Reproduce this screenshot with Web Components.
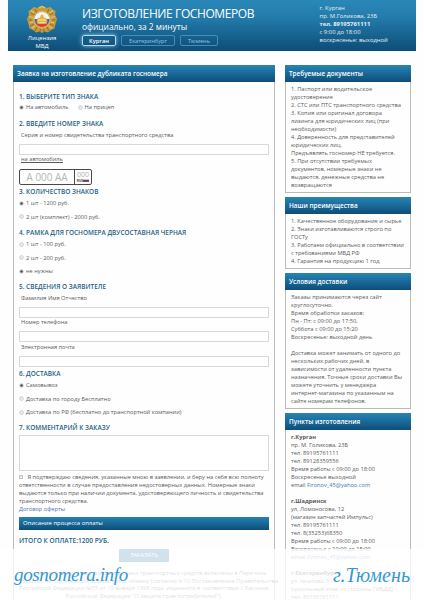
<!DOCTYPE html>
<html lang="ru">
<head>
<meta charset="utf-8">
<title>Изготовление госномеров</title>
<style>
    body {
        background: #FEFEFE;
        color: #5A5A5A;
        font: 5.7px/8px "Open Sans", "Noto Sans", sans-serif;
        height: 600px;
        margin: 0;
        overflow: hidden;
    }
</style>
</head>
<body>
<gn-page></gn-page>

<script>
'use strict';

/**
 * Defines an element whose shadow root is cloned from the given markup.
 *
 * @argument {String} name
 * @argument {String} html
 */
const define = (name, html) => {
    const $$templateElement = document.createElement('template');
    $$templateElement.innerHTML = html;

    window.customElements.define(name, class extends HTMLElement {
        constructor () {
            super();

            this.attachShadow({ mode: 'open' });
            this.shadowRoot.appendChild(document.importNode($$templateElement.content, true));
        }
    });
};

define('gn-emblem', `
<style>
    :host { display: block; height: 28px; width: 32px; }
    svg { display: block; }
</style>
<svg width="32" height="29" viewBox="0 0 32 29" xmlns="http://www.w3.org/2000/svg">
    <path d="M11.500 3 13.500 1.500 16 .5l2.500 1 2 1.500 4-1 2.500 2.500 2.500 1.500-.5 4L31 14l-1.500 5-1 4.500-3.500 1.500-3 2.500-3.500-1L16 28l-2.500-1.500-3.500 1L7 25l-3.500-1.500-1-4.500L1 14l2-4-.5-4L5 4.500 7.500 2z" fill="#C39A43"/>
    <path d="M5 8l4 2M9 4l2 4M27 8l-4 2M23 4l-2 4M2.500 15H6M29.500 15H26M4 21l4-2M28 21l-4-2M9 26l2-4M23 26l-2-4M14 27l.5-3M18 27l-.5-3" stroke="#8A6A2B" stroke-width=".9"/>
    <path d="M5 5.500 8 8M27 5.500 24 8M3 11.500l4 1M29 11.500l-4 1M4 18l3-1M28 18l-3-1M6 23.500 9 21M26 23.500 23 21M13 3l3-1.500L19 3" stroke="#E8C56C" stroke-width="1.100" fill="none"/>
    <circle cx="16" cy="14.500" r="9" fill="#D9B052"/>
    <circle cx="16" cy="14.500" r="7.500" fill="#F6F4EF"/>
    <path d="M8.500 14h15a7.500 7.500 0 0 1-1 4h-13a7.500 7.500 0 0 1-1-4z" fill="#3F64A8"/>
    <path d="M9.400 18h13.200a7.500 7.500 0 0 1-13.200 0z" fill="#D8402F"/>
    <path d="M10.500 16 12 12.800h2l1-3h2l1 3h2l1.500 3.200-1 2.800h-9z" fill="#E0B349"/>
    <path d="M12 15h8M12.500 17.800h7" stroke="#FFF0B4" stroke-width=".9"/>
</svg>
`);

define('gn-city', `
<style>
    :host {
        border: 1px solid #4190BC;
        border-radius: 2px;
        box-sizing: border-box;
        color: #93C5E0;
        display: block;
        font-size: 5.700px;
        height: 11px;
        line-height: 10px;
        text-align: center;
    }
    :host([active]) {
        border-color: #B7DCF0;
        box-shadow: 0 0 4px #8CC9EA;
        color: #FFFFFF;
        font-weight: 600;
    }
</style>
<slot></slot>
`);

define('gn-header', `
<style>
    :host {
        background: linear-gradient(#2A88B9, #237BAA 35%, #0E4C78);
        box-sizing: border-box;
        color: #FFFFFF;
        display: grid;
        grid-template-columns: 68px 1fr 97px;
        height: 51px;
        margin: 0 8px;
        padding-left: 6px;
    }
    .licence { align-items: center; display: flex; flex-direction: column; font-size: 5.900px; padding: 4.500px 12px 0 0; text-align: center; }
    .licence div { margin-top: 1px; }
    .title { font-size: 12px; letter-spacing: -.4px; line-height: 16px; padding-top: 5.500px; white-space: nowrap; }
    .subtitle { font-size: 8.400px; line-height: 9px; }
    .cities { display: grid; gap: 5px; grid-template-columns: 34px 54px 38px; margin-top: 4.500px; }
    .contacts { color: #E2F0F8; font-size: 5.900px; padding: 3.500px 0 0 .5px; white-space: nowrap; }
</style>
<div class="licence"><gn-emblem></gn-emblem><div>Лицензия<br>МВД</div></div>
<div>
    <div class="title">ИЗГОТОВЛЕНИЕ ГОСНОМЕРОВ</div>
    <div class="subtitle">официально, за 2 минуты</div>
    <div class="cities">
        <gn-city active>Курган</gn-city>
        <gn-city>Екатеринбург</gn-city>
        <gn-city>Тюмень</gn-city>
    </div>
</div>
<div class="contacts">г. Курган<br>пр. М.Голикова, 23Б<br><b>тел. 89195761111</b><br>с 9:00 до 18:00<br>воскресенье: выходной</div>
`);

define('gn-panel', `
<style>
    :host { border: 1px solid #BBBBBB; border-top: 0; box-sizing: border-box; display: block; }
    .heading {
        background: linear-gradient(#2785B5, #0D4D7A);
        color: #FFFFFF;
        font-size: 6.400px;
        font-weight: 600;
        height: 17px;
        line-height: 17px;
        margin: 0 -1px;
        padding-left: 4px;
        white-space: nowrap;
    }
    .content { padding: 3px 0 0 5px; white-space: nowrap; }
</style>
<div class="heading"><slot name="heading"></slot></div>
<div class="content"><slot></slot></div>
`);

define('gn-section', `
<style>
    :host { display: block; }
    .title { color: #255F86; font-size: 6.450px; font-weight: 600; height: 10px; line-height: 10px; white-space: nowrap; }
</style>
<div class="title"><slot name="title"></slot></div>
<slot></slot>
`);

define('gn-radio', `
<style>
    :host { align-items: center; display: flex; height: 13.500px; white-space: nowrap; }
    svg { display: block; margin-right: 2px; }
    .dot { display: none; }
    :host([checked]) .dot { display: block; }
</style>
<svg width="5" height="5" viewBox="0 0 5 5" xmlns="http://www.w3.org/2000/svg">
    <circle cx="2.500" cy="2.500" r="2" fill="#E8E8E8" stroke="#C4C4C4" stroke-width=".6"/>
    <circle class="dot" cx="2.500" cy="2.500" r="1.200" fill="#444444"/>
</svg>
<slot></slot>
`);

define('gn-field', `
<style>
    :host { display: block; }
    .label { height: 8px; padding: 0 0 5px 2px; white-space: nowrap; }
    .input { background: #FFFFFF; border: 1px solid #D8D8D8; box-sizing: border-box; height: 11px; }
</style>
<div class="label"><slot></slot></div>
<div class="input"></div>
`);

define('gn-plate', `
<style>
    :host {
        border: 1px solid #4A4A4A;
        border-radius: 2px;
        box-sizing: border-box;
        color: #B4B4B4;
        display: grid;
        grid-template-columns: 54px 1fr;
        height: 16px;
        width: 73px;
    }
    .number { font-size: 9.900px; line-height: 15px; text-align: center; white-space: nowrap; }
    .region { border-left: 1px solid #4A4A4A; font-size: 7px; line-height: 9px; text-align: center; }
    .country { align-items: center; color: #444444; display: flex; font-size: 3.200px; font-weight: bold; justify-content: center; line-height: 4px; }
    .flag { background: linear-gradient(#CCCCCC 33%, #3448A0 33% 66%, #C43A46 66%); height: 3px; width: 6px; }
</style>
<div class="number">А 000 АА</div>
<div class="region">000<div class="country">RUS<span class="flag"></span></div></div>
`);

define('gn-order', `
<style>
    :host { display: block; height: 518px; padding: 6.500px 5.500px 0 0; }
    .sections { display: grid; grid-template-rows: 27px 68px 41px 54px 87px 54.500px 50px; }
    .types { display: flex; gap: 9px; margin-top: -1px; }
    gn-field { margin-top: .4px; }
    .first { margin-top: 2.500px; }
    .kind { padding-left: 2px; text-decoration: underline; }
    gn-plate { margin-top: 5.500px; }
    .comment { background: #FFFFFF; border: 1px solid #D8D8D8; box-sizing: border-box; height: 36px; margin-top: 2px; }
    .check { background: #EEEEEE; border: 1px solid #C4C4C4; box-sizing: border-box; display: inline-block; height: 4px; margin-right: 4.500px; width: 4px; }
    .offer { color: #4578B5; }
    .payment { background: linear-gradient(#2481B0, #0D4D7A); color: #FFFFFF; font-size: 5.900px; height: 13px; line-height: 13px; margin-top: 4px; padding-left: 4px; }
    .total { color: #255F86; font-size: 6.600px; font-weight: 600; line-height: 10px; margin-top: 6px; }
    .submit { background: #1C6F9E; color: #FFFFFF; height: 13px; line-height: 13px; margin: 3px 0 0 100px; text-align: center; width: 50px; }
    .note { line-height: 7.500px; margin-top: 8px; text-align: center; }
</style>
<div class="sections">
    <gn-section>
        <span slot="title">1. ВЫБЕРИТЕ ТИП ЗНАКА</span>
        <div class="types"><gn-radio checked>На автомобиль</gn-radio><gn-radio>На прицеп</gn-radio></div>
    </gn-section>
    <gn-section>
        <span slot="title">2. ВВЕДИТЕ НОМЕР ЗНАКА</span>
        <gn-field class="first">Серия и номер свидетельства транспортного средства</gn-field>
        <div class="kind">на автомобиль</div>
        <gn-plate></gn-plate>
    </gn-section>
    <gn-section>
        <span slot="title">3. КОЛИЧЕСТВО ЗНАКОВ</span>
        <gn-radio checked>1 шт - 1200 руб.</gn-radio>
        <gn-radio>2 шт (комплект) - 2000 руб.</gn-radio>
    </gn-section>
    <gn-section>
        <span slot="title">4. РАМКА ДЛЯ ГОСНОМЕРА ДВУСОСТАВНАЯ ЧЕРНАЯ</span>
        <gn-radio>1 шт - 100 руб.</gn-radio>
        <gn-radio>2 шт - 200 руб.</gn-radio>
        <gn-radio checked>не нужны</gn-radio>
    </gn-section>
    <gn-section>
        <span slot="title">5. СВЕДЕНИЯ О ЗАЯВИТЕЛЕ</span>
        <gn-field class="first">Фамилия Имя Отчество</gn-field>
        <gn-field>Номер телефона</gn-field>
        <gn-field>Электронная почта</gn-field>
    </gn-section>
    <gn-section>
        <span slot="title">6. ДОСТАВКА</span>
        <gn-radio checked>Самовывоз</gn-radio>
        <gn-radio>Доставка по городу Бесплатно</gn-radio>
        <gn-radio>Доставка по РФ (бесплатно до транспортной компании)</gn-radio>
    </gn-section>
    <gn-section>
        <span slot="title">7. КОММЕНТАРИЙ К ЗАКАЗУ</span>
        <div class="comment"></div>
    </gn-section>
</div>
<div class="terms"><span class="check"></span>Я подтверждаю сведения, указанные мною в заявлении, и беру на себя всю полноту<br>ответственности в случае предоставления недостоверных данных. Номерные знаки<br>выдаются только при наличии документа, удостоверяющего личность и свидетельства<br>транспортного средства.<br><span class="offer">Договор оферты</span></div>
<div class="payment">Описание процесса оплаты</div>
<div class="total">ИТОГО К ОПЛАТЕ:1200 РУБ.</div>
<div class="submit">ЗАКАЗАТЬ</div>
<div class="note">Государственные регистрационные знаки транспортных средств включены в Перечень<br>товаров, не подлежащих возврату или обмену (согласно п.10 Постановления Правительства<br>Российской Федерации №55 от 19 января 1998 года, изданного в соответствии с Законом<br>Российской Федерации "О защите прав потребителей").</div>
`);

define('gn-watermark', `
<style>
    :host {
        background: rgba(255, 255, 255, .8);
        bottom: 0;
        box-sizing: border-box;
        color: #3598D4;
        display: flex;
        font: italic 20px/30px "Liberation Serif", serif;
        height: 51px;
        justify-content: space-between;
        left: 0;
        padding: 11px 14px 0;
        position: absolute;
        right: 0;
    }
    .site { font-size: 19px; letter-spacing: -.35px; }
</style>
<span class="site">gosnomera.info</span><span>г.Тюмень</span>
`);

define('gn-page', `
<style>
    :host { display: block; height: 600px; overflow: hidden; position: relative; }
    main { align-items: start; display: grid; gap: 10px; grid-template-columns: 262px 126px; padding: 14px 0 0 13px; }
    aside { display: grid; gap: 4px; grid-template-rows: 128px 72px 136px 220px; }
    .link { color: #4578B5; }
</style>
<gn-header></gn-header>
<main>
    <gn-panel><span slot="heading">Заявка на изготовление дубликата госномера</span><gn-order></gn-order></gn-panel>
    <aside>
        <gn-panel><span slot="heading">Требуемые документы</span>1. Паспорт или водительское<br>удостоверение<br>2. СТС или ПТС транспортного средства<br>3. Копия или оригинал договора<br>лизинга для юридических лиц (при<br>необходимости)<br>4. Доверенность для представителей<br>юридических лиц.<br>Предъявлять госномер НЕ требуется.<br>5. При отсутствии требуемых<br>документов, номерные знаки не<br>выдаются, денежные средства не<br>возвращаются</gn-panel>
        <gn-panel><span slot="heading">Наши преимущества</span>1. Качественное оборудование и сырье<br>2. Знаки изготавливаются строго по<br>ГОСТу<br>3. Работаем официально в соответствии<br>с требованиями МВД РФ<br>4. Гарантия на продукцию 1 год</gn-panel>
        <gn-panel><span slot="heading">Условия доставки</span>Заказы принимаются через сайт<br>круглосуточно.<br>Время обработки заказов:<br>Пн - Пт: с 09:00 до 17:50,<br>Суббота с 09:00 до 15:20<br>Воскресенье: выходной день<br><br>Доставка может занимать от одного до<br>нескольких рабочих дней, в<br>зависимости от удаленности пункта<br>назначения. Точные сроки доставки Вы<br>можете уточнить у менеджера<br>интернет-магазина по указанным на<br>сайте номерам телефонов.</gn-panel>
        <gn-panel><span slot="heading">Пункты изготовления</span><b>г.Курган</b><br>пр. М. Голикова, 23Б<br>тел. 89195761111<br>тел. 89128359556<br>Время работы с 09:00 до 18:00<br>Воскресенье выходной<br>email <span class="link">Fironov_45@yahoo.com</span><br><br><b>г.Шадринск</b><br>ул. Ломоносова, 12<br>(магазин запчастей Импульс)<br>тел. 89195761111<br>тел. 8(35253)68350<br>Время работы с 09:00 до 18:00<br>Воскресенье с 10:00 до 15:00<br>email <span class="link">Fironov_45@yahoo.com</span><br><br><b>г.Екатеринбург</b><br>ул. Чкалова, 5<br>(цокольный этаж со стороны ГИБДД)<br>тел. 89195761111</gn-panel>
    </aside>
</main>
<gn-watermark></gn-watermark>
`);
</script>
</body>
</html>
